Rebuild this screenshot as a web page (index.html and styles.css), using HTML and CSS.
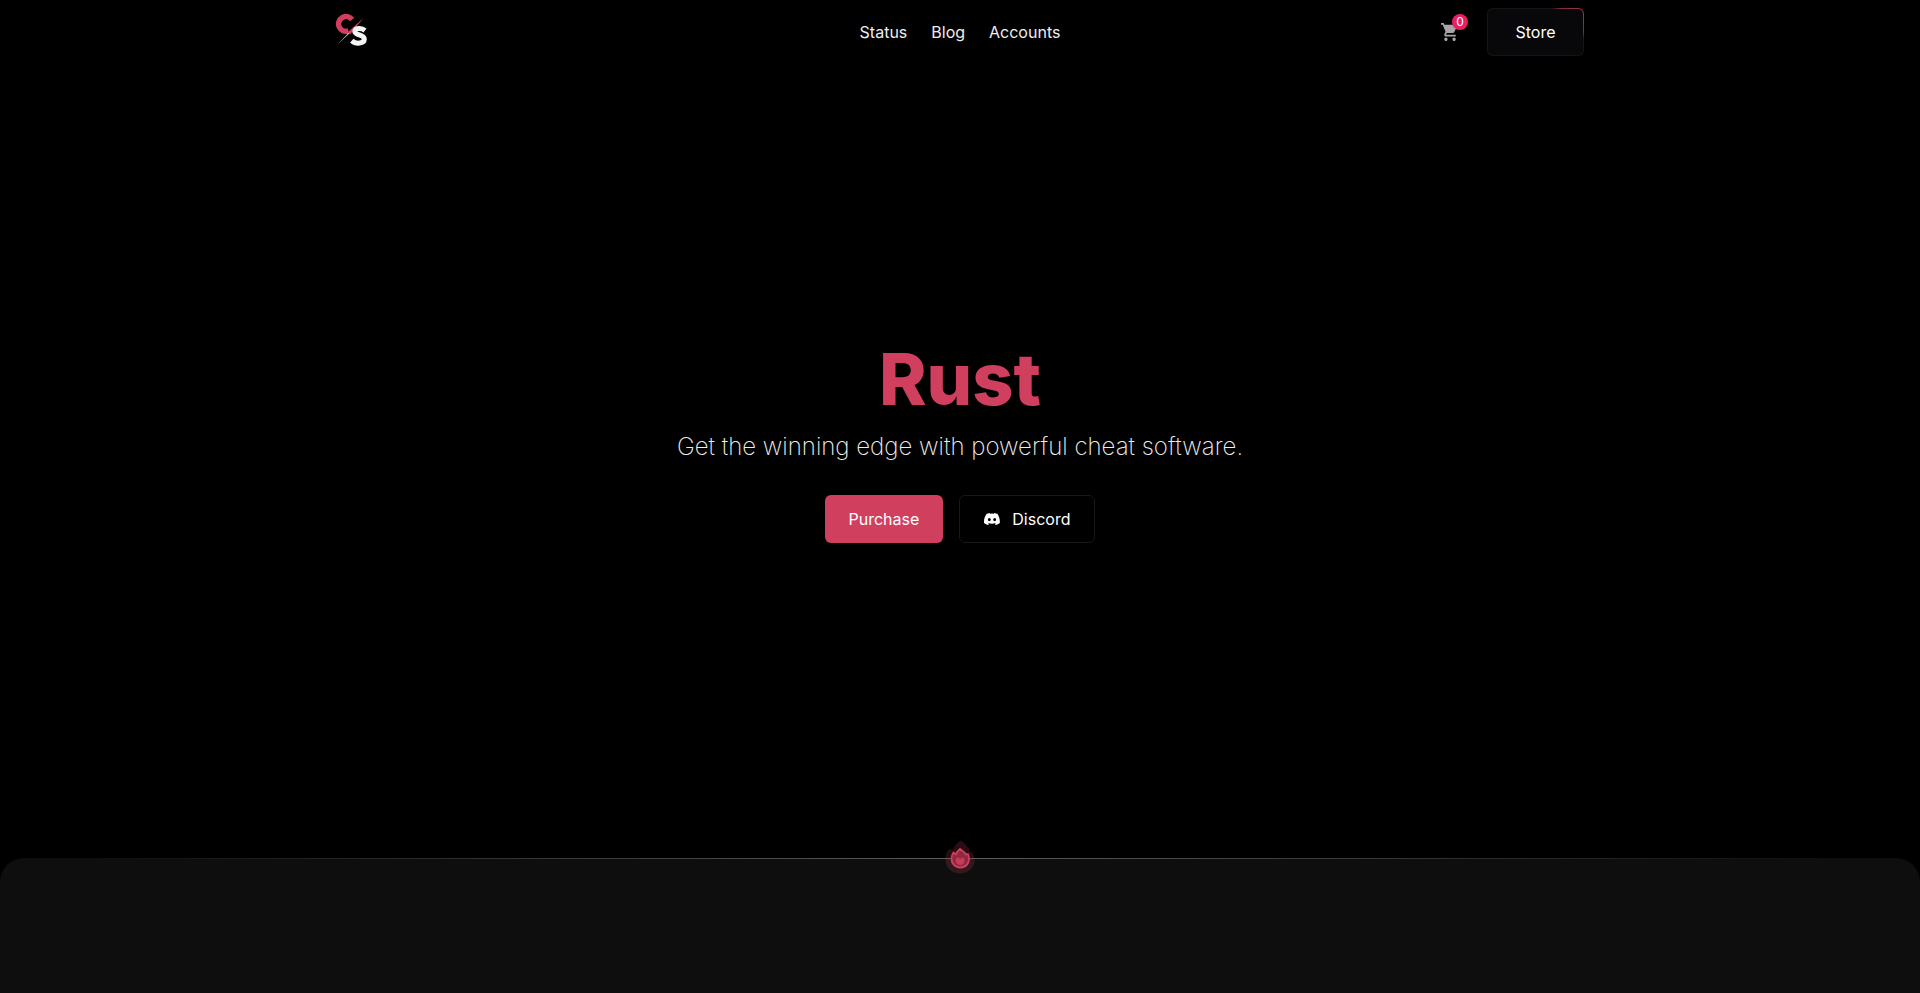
FILE: index.html
```html
<!DOCTYPE html>
<html lang="en">
<head>
  <meta charset="UTF-8">
  <title>Rust</title>
  <meta name="viewport" content="width=device-width, initial-scale=1">
  <link rel="stylesheet" href="styles.css">
</head>
<body>
  <header class="header">
    <div class="header-side">
      <a class="logo" href="#" aria-label="Home">
        <svg width="32" height="36" viewBox="0 0 32 36" fill="none">
          <path d="M16 5.600A7.400 7.400 0 1 0 12.500 16.900" stroke="#d13f5f" stroke-width="5.400"/>
          <path d="M1.500 30.500 12 19.500 17 16Z" fill="#f1e9eb"/>
          <path d="M27.500 4 11.500 18.500 14 20.500Z" fill="#d13f5f"/>
          <path d="M29 16.500C25.500 13.600 19 13.900 18.800 17.600C18.800 21.600 28.300 20.400 28.300 25C28.300 29.800 20 30.600 15.800 26.600" stroke="#f5f5f5" stroke-width="5"/>
        </svg>
      </a>
    </div>
    <nav class="nav">
      <a href="#">Status</a>
      <a href="#">Blog</a>
      <a href="#">Accounts</a>
    </nav>
    <div class="header-side header-actions">
      <button class="cart" type="button" aria-label="Cart">
        <svg width="18" height="20" viewBox="1 1 22 22" preserveAspectRatio="none" fill="#a8a4a9">
          <path d="M7 18c-1.100 0-1.990.9-1.990 2S5.900 22 7 22s2-.9 2-2-.9-2-2-2zM1 2v2h2l3.600 7.590-1.350 2.450c-.16.28-.25.61-.25.96 0 1.100.9 2 2 2h12v-2H7.420c-.14 0-.25-.11-.25-.25l.03-.12.9-1.630h7.450c.75 0 1.410-.41 1.750-1.030l3.580-6.490A1 1 0 0 0 20 4H5.210l-.94-2H1zm16 16c-1.100 0-1.990.9-1.990 2s.89 2 1.990 2 2-.9 2-2-.9-2-2-2z"/>
        </svg>
        <span class="badge">0</span>
      </button>
      <a class="btn btn-store" href="#">Store</a>
    </div>
  </header>

  <main>
    <section class="hero">
      <h1>Rust</h1>
      <p class="subtitle">Get the winning edge with powerful cheat software.</p>
      <div class="hero-buttons">
        <button class="btn btn-primary" type="button">Purchase</button>
        <a class="btn btn-outline" href="#">
          <svg width="16" height="16" viewBox="0 0 24 24" fill="#fff">
            <path d="M20.317 4.370a19.800 19.800 0 0 0-4.885-1.515.07.07 0 0 0-.079.037c-.21.375-.444.864-.608 1.250a18.270 18.270 0 0 0-5.487 0 12.600 12.600 0 0 0-.617-1.250.08.08 0 0 0-.079-.037A19.700 19.700 0 0 0 3.677 4.370C.533 9.046-.320 13.580.099 18.058a.08.08 0 0 0 .031.057 19.900 19.900 0 0 0 5.993 3.030.08.08 0 0 0 .084-.028c.462-.63.874-1.295 1.226-1.994a.076.076 0 0 0-.041-.106 13.100 13.100 0 0 1-1.872-.892l.364-.42c3.928 1.793 8.180 1.793 12.061 0l.366.420a12.300 12.300 0 0 1-1.873.892.077.077 0 0 0-.041.107c.36.698.772 1.362 1.225 1.993a.08.08 0 0 0 .084.028 19.800 19.800 0 0 0 6.002-3.030c.531-5.142-.838-9.643-3.391-13.745zM8.020 15.331c-1.183 0-2.157-1.086-2.157-2.419s.956-2.419 2.157-2.419c1.210 0 2.176 1.096 2.157 2.420 0 1.332-.956 2.418-2.157 2.418zm7.975 0c-1.183 0-2.157-1.086-2.157-2.419s.955-2.419 2.157-2.419c1.210 0 2.176 1.096 2.157 2.420 0 1.332-.946 2.418-2.157 2.418z"/>
          </svg>
          Discord
        </a>
      </div>
    </section>

    <section class="panel">
      <!-- flame sits on the divider line -->
      <svg class="flame" width="32" height="36" viewBox="0 0 32 36">
        <path d="M16.500 .5C20 2.500 24.500 7 26 11C30 13 31 18 30.500 22C29 29 23 33.500 16 33.500C8 33.500 2.500 28 1.500 21C1 17 2 12 5.500 9L9 10C10 6 13 3 16.500 .5Z" fill="#d13f5f" fill-opacity=".2"/>
        <path d="M16 9C19 11 21 12.500 22 14.500L24 14C25.500 18 25 21 24 23C22.500 26 19 27.500 16 27.500C11.500 27.500 7.500 24 7.500 19C7.500 16.500 8 14.500 9.500 12.500L12 14.500C12.500 12 14 10.500 16 9Z" fill="#8e2941" stroke="#d13f5f" stroke-width="1.800" stroke-linejoin="round"/>
        <path d="M12 18.500C10.500 22 13 25 16 25C19.500 25 21.500 22 20 18.500C19 17 17.500 17.500 16.500 19C14.500 17 13 17 12 18.500Z" fill="#c63b59"/>
      </svg>
    </section>
  </main>
</body>
</html>
```

FILE: styles.css
```css
* {
  box-sizing: border-box;
}
body {
  margin: 0;
  min-height: 100vh;
  display: flex;
  flex-direction: column;
  background: #000;
  color: #fff;
  font-family: Inter, "Liberation Sans", sans-serif;
  font-size: 16px;
  line-height: 24px;
}
a {
  color: inherit;
  text-decoration: none;
}
.header {
  display: flex;
  align-items: center;
  width: 100%;
  max-width: 1280px;
  height: 64px;
  margin: 0 auto;
  padding: 0 16px;
}
.header-side {
  flex: 1;
  display: flex;
  align-items: center;
}
.header-actions {
  justify-content: flex-end;
  gap: 28px;
}
.logo {
  display: flex;
}
.nav {
  display: flex;
  gap: 24px;
  color: #eee;
}
.cart {
  position: relative;
  display: flex;
  padding: 0;
  border: none;
  background: none;
  cursor: pointer;
}
.badge {
  position: absolute;
  top: -8px;
  right: -9px;
  width: 16px;
  height: 16px;
  border-radius: 50%;
  background: #e91e63;
  color: #fff;
  font-family: Inter, sans-serif;
  font-size: 12px;
  line-height: 16px;
  text-align: center;
}
.btn {
  display: flex;
  align-items: center;
  justify-content: center;
  gap: 12px;
  height: 48px;
  padding: 0 24px;
  border: 1px solid transparent;
  border-radius: 6px;
  color: #fff;
  font-family: inherit;
  font-size: 16px;
  line-height: 24px;
  cursor: pointer;
}
.btn-store {
  width: 97px;
  background:
    linear-gradient(#08080a, #08080a) padding-box,
    radial-gradient(circle at 100% 0, #a8334d 0, #7d2a3c 24px, #151517 32px) border-box;
}
.btn-primary {
  padding: 0 23px;
  background: #d13f5f;
}
.btn-outline {
  border-color: #18181a;
}

main {
  flex: 1;
  display: flex;
  flex-direction: column;
}
.hero {
  flex: 1;
  display: flex;
  flex-direction: column;
  align-items: center;
  justify-content: center;
  padding: 0 16px 36px;
  text-align: center;
}
h1 {
  margin: 0;
  color: #d13f5f;
  font-size: 72px;
  font-weight: 800;
  line-height: 72px;
}
.subtitle {
  margin: 16px 0 32px;
  color: #eee;
  font-size: 24px;
  font-weight: 200;
  line-height: 32px;
}
.hero-buttons {
  display: flex;
  gap: 16px;
}

.panel {
  position: relative;
  min-height: 135px;
  border-radius: 24px 24px 0 0;
  background: #0e0e0e;
}
.panel::before {
  content: "";
  display: block;
  height: 1px;
  background: linear-gradient(90deg, transparent 5%, #5c5c5c 50%, transparent 95%);
}
.flame {
  position: absolute;
  top: -18px;
  left: 50%;
  transform: translateX(-50%);
}
```
